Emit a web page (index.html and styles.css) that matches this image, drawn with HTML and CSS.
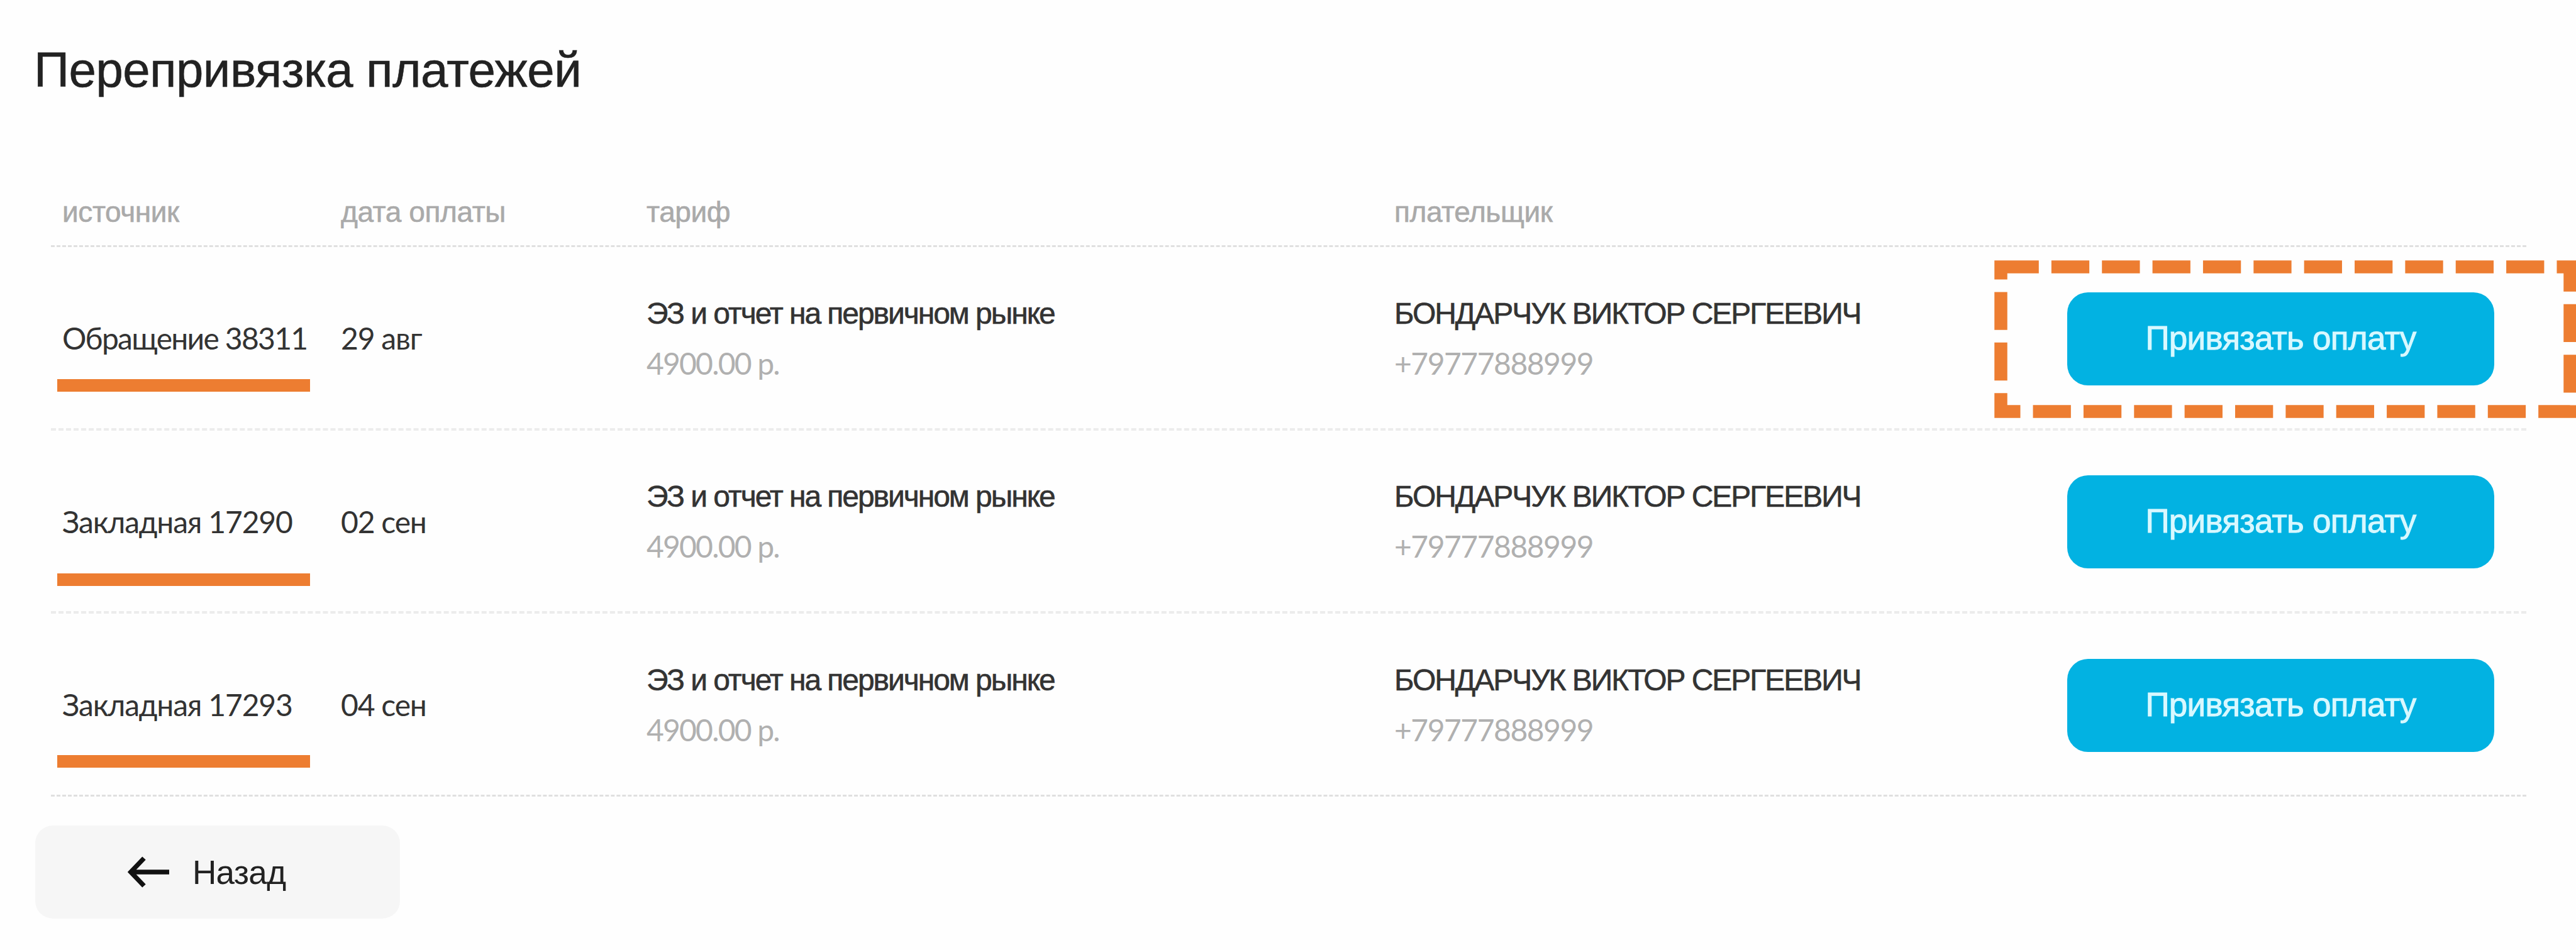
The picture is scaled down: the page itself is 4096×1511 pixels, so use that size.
FILE: index.html
```
<!DOCTYPE html>
<html lang="ru">
<head>
  <meta charset="UTF-8">
  <title>Перепривязка платежей</title>
  <link rel="stylesheet" href="styles.css">
</head>
<body>

<h1 class="title">Перепривязка платежей</h1>

<div class="payments">
  <div class="row head">
    <div>источник</div>
    <div>дата оплаты</div>
    <div>тариф</div>
    <div>плательщик</div>
    <div></div>
  </div>

  <div class="row row-first">
    <div class="source"><span class="text text-long">Обращение 38311</span><i class="mark"></i></div>
    <div><span class="text">29 авг</span></div>
    <div>
      <p class="main">ЭЗ и отчет на первичном рынке</p>
      <p class="sub">4900.00 р.</p>
    </div>
    <div>
      <p class="main">БОНДАРЧУК ВИКТОР СЕРГЕЕВИЧ</p>
      <p class="sub phone">+79777888999</p>
    </div>
    <div class="action">
      <button class="btn">Привязать оплату</button>
      <svg class="frame" width="926" height="252" viewBox="0 0 926 252">
        <rect x="10.5" y="10.5" width="905" height="230"/>
      </svg>
    </div>
  </div>

  <div class="row">
    <div class="source"><span class="text">Закладная 17290</span><i class="mark mark-low"></i></div>
    <div><span class="text">02 сен</span></div>
    <div>
      <p class="main">ЭЗ и отчет на первичном рынке</p>
      <p class="sub">4900.00 р.</p>
    </div>
    <div>
      <p class="main">БОНДАРЧУК ВИКТОР СЕРГЕЕВИЧ</p>
      <p class="sub phone">+79777888999</p>
    </div>
    <div class="action"><button class="btn">Привязать оплату</button></div>
  </div>

  <div class="row row-last">
    <div class="source"><span class="text">Закладная 17293</span><i class="mark mark-low"></i></div>
    <div><span class="text">04 сен</span></div>
    <div>
      <p class="main">ЭЗ и отчет на первичном рынке</p>
      <p class="sub">4900.00 р.</p>
    </div>
    <div>
      <p class="main">БОНДАРЧУК ВИКТОР СЕРГЕЕВИЧ</p>
      <p class="sub phone">+79777888999</p>
    </div>
    <div class="action"><button class="btn">Привязать оплату</button></div>
  </div>
</div>

<button class="back">
  <svg class="arrow" width="68" height="50" viewBox="0 0 68 50">
    <path d="M27 3 L6 25 L27 47 M6 25 H67"/>
  </svg>
  Назад
</button>

</body>
</html>
```
FILE: styles.css
```
* {
  box-sizing: border-box;
}
body {
  margin: 0;
  width: 4096px;
  height: 1511px;
  overflow: hidden;
  background: #fefefe;
  color: #333;
  font-family: "Liberation Sans", Arial, sans-serif;
}
p {
  margin: 0;
}

.title {
  margin: 0;
  padding: 55px 0 0 54px;
  height: 280px;
  font-size: 78px;
  line-height: 112px;
  font-weight: 400;
  letter-spacing: -0.5px;
  color: #222;
  -webkit-text-stroke: 0.6px;
}

/* payments table */
.payments {
  margin: 0 79px 0 81px;
}
.row {
  display: grid;
  grid-template-columns: 443px 486px 1189px 1070px 1fr;
  align-items: center;
  height: 291px;
  padding: 3px 0 0 18px;
  border-bottom: 4px dashed #ececec;
}
.head {
  height: 113px;
  color: #aaa;
  font-size: 46px;
  letter-spacing: -0.4px;
  border-bottom: 3px dashed #e0e0e0;
  -webkit-text-stroke: 0.6px;
}
.row-first {
  height: 292px;
}
.row-last {
  border-bottom: 3px dashed #e0e0e0;
}
.text {
  position: relative;
  top: -1px;
  font-family: Lato, sans-serif;
  font-size: 48px;
  letter-spacing: -1.2px;
}
.text-long {
  letter-spacing: -1.7px;
}
.main {
  font-size: 48px;
  line-height: 78px;
  letter-spacing: -2.05px;
  -webkit-text-stroke: 0.6px;
}
.sub {
  font-family: Lato, sans-serif;
  font-size: 48px;
  line-height: 80px;
  letter-spacing: -1.8px;
  color: #b0b0b0;
}
.phone {
  letter-spacing: -1.5px;
}

/* orange notes over the rows */
.source,
.action {
  position: relative;
}
.mark {
  position: absolute;
  left: -8px;
  top: calc(50% + 64px);
  width: 402px;
  height: 20px;
  background: #ed7d31;
}
.mark-low {
  top: calc(50% + 82px);
}
.row-last .mark {
  top: calc(50% + 79px);
}
.frame {
  position: absolute;
  left: -116px;
  top: -51px;
  fill: none;
  stroke: #ed7d31;
  stroke-width: 20.5;
  stroke-dasharray: 60.3 20.06;
}

.btn {
  display: block;
  width: 679px;
  height: 148px;
  padding: 0 0 3px;
  border: 0;
  border-radius: 33px;
  background: #02b2e2;
  color: #d8f8ff;
  font-family: inherit;
  font-size: 53px;
  letter-spacing: -0.7px;
  -webkit-text-stroke: 1px;
}

.back {
  display: flex;
  align-items: center;
  gap: 36px;
  margin: 46px 0 0 56px;
  padding: 0 0 0 146px;
  width: 580px;
  height: 148px;
  border: 0;
  border-radius: 28px;
  background: #f6f6f6;
  color: #222;
  font-family: inherit;
  font-size: 53px;
  letter-spacing: -0.7px;
}
.arrow {
  fill: none;
  stroke: #111;
  stroke-width: 7.5;
}
```
